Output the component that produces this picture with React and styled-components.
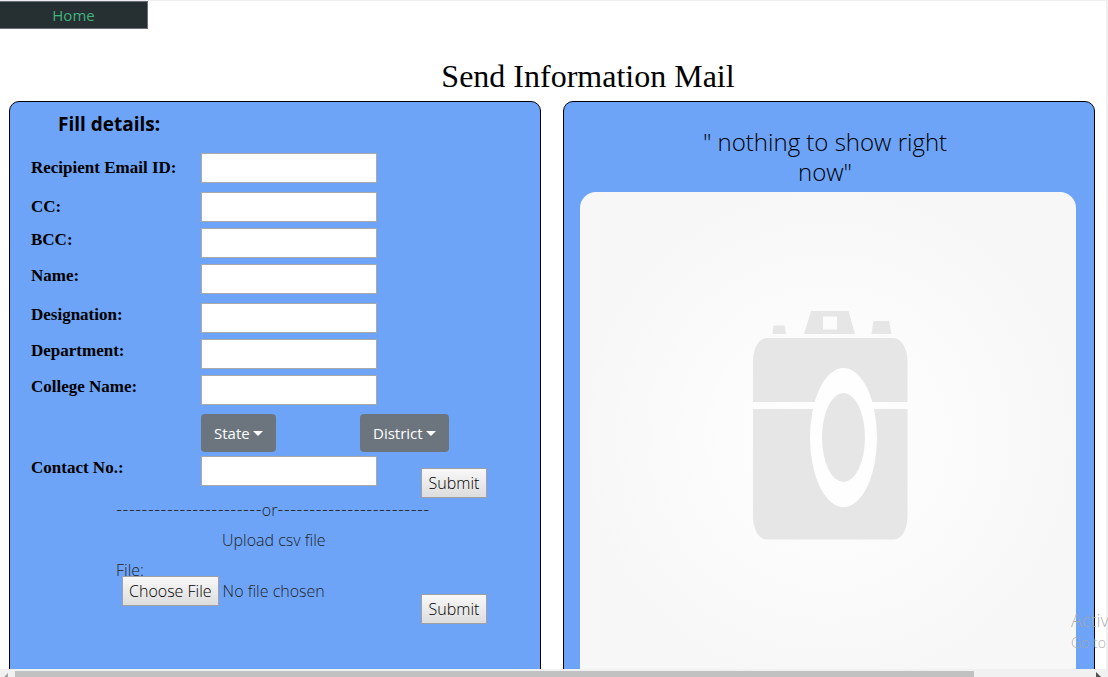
import React from "react";
import styled, { createGlobalStyle } from "styled-components";

const sans = '"Open Sans", "Noto Sans", sans-serif';
const serif = '"Liberation Serif", "Times New Roman", serif';

const GlobalStyle = createGlobalStyle`
  *, *::before, *::after { box-sizing: border-box; }
  body { margin: 0; background: #fff; color: #212529; font: 340 16px/24px ${sans}; }
  input, button, select { font: inherit; margin: 0; }
`;

const Shell = styled.div`
  position: relative;
  display: flex;
  flex-direction: column;
  height: 100vh;
  overflow: hidden;
  border-top: 1px solid #eee;
`;

const Content = styled.div`
  flex: 1;
  min-height: 0;
  overflow: hidden;
  border-right: 2px solid #f0f0f0;
`;

const Nav = styled.nav`
  display: flex;
`;

const NavLink = styled.a`
  width: 148px;
  height: 28px;
  border: 1px solid #6a6e7c;
  border-left: 0;
  background: #262f32;
  color: #41b37d;
  font-size: 15px;
  font-weight: 400;
  line-height: 26px;
  text-align: center;
  text-decoration: none;
`;

const Title = styled.h1`
  margin: 28px 0 6px;
  padding-left: 70px;
  color: #000;
  font: 400 32px/38px ${serif};
  text-align: center;
`;

const Panels = styled.main`
  display: grid;
  grid-template-columns: 1fr 1fr;
  gap: 22px;
  padding: 0 11px 0 9px;
`;

const Panel = styled.section`
  min-height: 620px;
  border: 1px solid #000;
  border-radius: 10px;
  background: #6ea4f7;
`;

const FormPanel = styled(Panel)`
  padding: 7px 21px;
`;

const PanelHeading = styled.h2`
  margin: 0 0 14px 27px;
  color: #000;
  font-size: 19px;
  font-weight: 680;
  line-height: 30px;
`;

const Form = styled.form`
  display: flex;
  flex-direction: column;
`;

const Group = styled.div`
  display: flex;
  flex-direction: column;
  gap: 6px;
  margin-bottom: ${(p) => (p.$tight ? 4 : 9)}px;
`;

const Row = styled.div`
  display: grid;
  grid-template-columns: 170px 159px 1fr;
  align-items: start;
`;

const Label = styled.label`
  color: #000;
  font: 700 17px/${(p) => (p.$raised ? 24 : 30)}px ${serif};
`;

const TextInput = styled.input`
  width: 176px;
  height: 30px;
  padding: 1px 4px;
  border: 1px solid #a9a9a9;
  background: #fff;
`;

const SelectBox = styled.span`
  position: relative;
  justify-self: start;
  display: inline-flex;
`;

const Select = styled.select`
  appearance: none;
  height: 38px;
  padding: 0 26px 0 13px;
  border: 0;
  border-radius: 4px;
  background: #6c757d;
  color: #fff;
  font-size: 15px;
  font-weight: 400;
`;

const Caret = styled.span`
  position: absolute;
  top: 17px;
  right: 13px;
  border-top: 5px solid #fff;
  border-left: 5px solid transparent;
  border-right: 5px solid transparent;
  pointer-events: none;
`;

const buttonLook = `
  height: 30px;
  padding: 0 6px;
  border: 1px solid #a0a0a0;
  border-radius: 0;
  background: linear-gradient(#f8f8f8, #dddddd);
  color: #000;
  font: 340 16px/28px ${sans};
`;

const SubmitButton = styled.button`
  ${buttonLook}
  width: 66px;
  justify-self: start;
  margin: ${(p) => p.$top}px 0 0 61px;
`;

const Divider = styled.div`
  display: flex;
  margin-left: 85px;
  white-space: nowrap;
`;

const Dashes = styled.span`
  font-family: Inter, sans-serif;
  font-size: 14px;
`;

const UploadTitle = styled.div`
  margin: 6px 0 6px 191px;
`;

const FileLabel = styled.label`
  align-self: flex-start;
  margin-left: 85px;
`;

const UploadRow = styled.div`
  display: grid;
  grid-template-columns: 329px 1fr;
  align-items: start;
  margin-top: -6px;
`;

const FileInput = styled.input`
  width: 230px;
  height: 30px;
  margin-left: 91px;
  line-height: 28px;

  &::file-selector-button {
    ${buttonLook}
    margin-right: 4px;
  }
`;

const PreviewPanel = styled(Panel)`
  padding: 25px 18px 0 16px;
`;

const Message = styled.p`
  max-width: 286px;
  margin: 0 auto 5px;
  padding-right: 6px;
  color: #000;
  font-size: 24px;
  line-height: 30px;
  text-align: center;
`;

const Picture = styled.svg`
  display: block;
  width: 100%;
  height: 500px;
  border-radius: 16px;
`;

const Watermark = styled.div`
  position: absolute;
  right: 0;
  bottom: 23px;
  width: 37px;
  overflow: hidden;
  color: rgba(165, 165, 165, 0.9);
  font-size: 14px;
  line-height: 22px;
  white-space: nowrap;
  pointer-events: none;
`;

const WatermarkLead = styled.div`
  font-size: 18px;
  line-height: 24px;
`;

const ScrollTrack = styled.div`
  display: flex;
  align-items: flex-end;
  height: 8px;
  background: #f1f1f1;
`;

const ScrollRail = styled.div`
  flex: 1;
`;

const ScrollThumb = styled.div`
  width: 89%;
  height: 6px;
  background: #c1c1c1;
`;

const Arrow = styled.svg`
  width: 15px;
  height: 6px;
  flex: none;
`;

const groups = [
  [{ id: "recipient", label: "Recipient Email ID:" }],
  [
    { id: "cc", label: "CC:" },
    { id: "bcc", label: "BCC:", raised: true },
    { id: "name", label: "Name:", raised: true },
  ],
  [
    { id: "designation", label: "Designation:", raised: true },
    { id: "department", label: "Department:", raised: true },
    { id: "college", label: "College Name:", raised: true },
  ],
];

function Dropdown({ name }) {
  return (
    <SelectBox>
      <Select aria-label={name}>
        <option>{name}</option>
      </Select>
      <Caret />
    </SelectBox>
  );
}

function CameraPicture() {
  return (
    <Picture viewBox="0 0 496 500" preserveAspectRatio="none" role="img" aria-label="Camera">
      <defs>
        <radialGradient id="glow" cx="0.5" cy="0.49" r="0.5">
          <stop offset="0" stopColor="#fefefe" />
          <stop offset="0.4" stopColor="#fcfcfc" />
          <stop offset="1" stopColor="#f7f7f7" />
        </radialGradient>
      </defs>
      <rect width="496" height="500" fill="url(#glow)" />
      <g fill="#e6e6e6">
        <path d="M193.500 133.500h11l1.500 8.500h-13.500z" />
        <path fillRule="evenodd" d="M231 119h37.500l6.500 23h-51zM243 124.500v13h14v-13z" />
        <path d="M293.500 129h15.500l2.500 13h-20z" />
        <path d="M173 210V170c0-14 6-24 14-24h126c8 0 14.500 10 14.500 24v40z" />
        <path d="M173 217H327.500V324c0 14-6 23.500-14 23.500H187c-8 0-14-9.500-14-23.500z" />
      </g>
      <ellipse cx="263.500" cy="245.500" rx="33.500" ry="69.500" fill="#fefefe" />
      <ellipse cx="263.500" cy="245.500" rx="21.500" ry="44.500" fill="#e6e6e6" />
    </Picture>
  );
}

export default function App() {
  return (
    <Shell>
      <GlobalStyle />
      <Content>
        <Nav>
          <NavLink href="#home">Home</NavLink>
        </Nav>
        <Title>Send Information Mail</Title>
        <Panels>
          <FormPanel>
            <PanelHeading>Fill details:</PanelHeading>
            <Form onSubmit={(e) => e.preventDefault()}>
              {groups.map((fields) => (
                <Group key={fields[0].id}>
                  {fields.map((f) => (
                    <Row key={f.id}>
                      <Label htmlFor={f.id} $raised={f.raised}>{f.label}</Label>
                      <TextInput id={f.id} type="text" />
                    </Row>
                  ))}
                </Group>
              ))}
              <Group $tight>
                <Row>
                  <span />
                  <Dropdown name="State" />
                  <Dropdown name="District" />
                </Row>
              </Group>
              <Row>
                <Label htmlFor="contact" $raised>Contact No.:</Label>
                <TextInput id="contact" type="text" />
                <SubmitButton type="submit" $top={12}>Submit</SubmitButton>
              </Row>
            </Form>
            <Form onSubmit={(e) => e.preventDefault()}>
              <Divider>
                <Dashes>{"-".repeat(23)}</Dashes>
                or
                <Dashes>{"-".repeat(24)}</Dashes>
              </Divider>
              <UploadTitle>Upload csv file</UploadTitle>
              <FileLabel htmlFor="csv">File:</FileLabel>
              <UploadRow>
                <FileInput id="csv" type="file" />
                <SubmitButton type="submit" $top={18}>Submit</SubmitButton>
              </UploadRow>
            </Form>
          </FormPanel>
          <PreviewPanel>
            <Message>" nothing to show right now"</Message>
            <CameraPicture />
          </PreviewPanel>
        </Panels>
      </Content>
      <Watermark>
        <WatermarkLead>Activ</WatermarkLead>
        Go to
      </Watermark>
      <ScrollTrack>
        <Arrow viewBox="0 0 15 6"><path d="M8 2v4H4z" fill="#a3a3a3" /></Arrow>
        <ScrollRail><ScrollThumb /></ScrollRail>
        <Arrow viewBox="0 0 15 6"><path d="M3 1l5 5H3z" fill="#505050" /></Arrow>
      </ScrollTrack>
    </Shell>
  );
}
